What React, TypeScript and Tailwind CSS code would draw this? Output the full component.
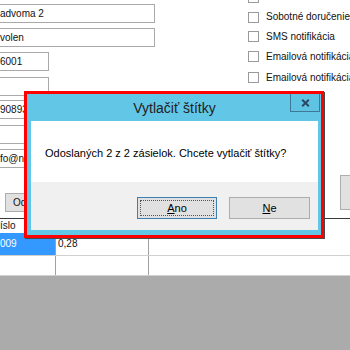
import React from "react";

function Field({ cls, text }: { cls: string; text?: string }) {
  return (
    <div className={`h-[19px] border border-[#a9a9a9] bg-white ml-[-8px] pl-[7px] flex items-center whitespace-nowrap overflow-hidden ${cls}`}>
      {text}
    </div>
  );
}

function Check({ cls, label }: { cls: string; label: string }) {
  return (
    <div className={`flex items-center gap-[7px] whitespace-nowrap ${cls}`}>
      <div className="w-[11px] h-[11px] border border-[#9a9a9a] bg-white shrink-0" />
      <span>{label}</span>
    </div>
  );
}

export default function App() {
  return (
    <div className="relative w-[350px] h-[350px] overflow-hidden bg-white text-[10px] leading-[12px] text-[#111] font-['Liberation_Sans',Arial,sans-serif]">
      <div className="flex flex-col h-full">
        {/* top form area */}
        <div className="flex h-[175px]">
          <div className="w-[248px] shrink-0 flex flex-col">
            <Field cls="mt-[4px] w-[163px]" text="advoma 2" />
            <Field cls="mt-[5px] w-[163px]" text="volen" />
            <Field cls="mt-[5px] w-[57px]" text="6001" />
            <Field cls="mt-[6px] w-[57px]" text="" />
            <Field cls="mt-[4px] w-[163px]" text="90893" />
            <Field cls="mt-[6px] w-[163px]" text="" />
            <Field cls="mt-[5px] w-[163px]" text="fo@ne" />
          </div>
          <div className="flex flex-col mt-[-13px] min-w-0">
            <Check cls="h-[20px]" label="" />
            <Check cls="h-[20px]" label="Sobotné doručenie" />
            <Check cls="h-[19px]" label="SMS notifikácia" />
            <Check cls="h-[21px]" label="Emailová notifikácia" />
            <Check cls="h-[21px]" label="Emailová notifikácia" />
          </div>
        </div>

        {/* button row */}
        <div className="flex justify-between h-[43px]">
          <div className="ml-[5px] mt-[18px] h-[19px] w-[90px] border border-[#adadad] bg-[#e1e1e1] pl-[7px] flex items-center">
            Odoslať
          </div>
          <div className="w-[20px] h-[35px] mr-[-10px] border border-[#adadad] bg-[#e1e1e1]" />
        </div>

        {/* table */}
        <div className="border-t border-[#3a3a3a] grid grid-cols-[56px_93px_1fr]">
          <div className="h-[14px] border-r border-[#a0a0a0] flex items-center whitespace-nowrap">íslo</div>
          <div className="h-[14px] border-r border-[#a0a0a0]" />
          <div className="h-[14px]" />

          <div className="h-[22px] border-r border-[#a0a0a0] bg-[#3399ff] text-white flex items-center pl-0">009</div>
          <div className="h-[22px] border-r border-[#a0a0a0] flex items-center pl-[2px]">0,28</div>
          <div className="h-[22px]" />

          <div className="h-[21px] border-t border-b border-[#d0d0d0]">
            <div className="h-full border-r border-[#a0a0a0]" />
          </div>
          <div className="h-[21px] border-t border-b border-[#d0d0d0]">
            <div className="h-full border-r border-[#a0a0a0]" />
          </div>
          <div className="h-[21px] border-t border-b border-[#d0d0d0]" />
        </div>

        <div className="flex-1 bg-[#ababab]" />
      </div>

      {/* dialog */}
      <div className="absolute left-[24px] top-[91px] w-[300px] border-[3px] border-[#ff0000] shadow-[1px_1px_0_#4a4a4a]">
        <div className="bg-[#62c6e7] pl-[4px] pr-[3px] pb-[5px] flex flex-col">
          <div className="relative h-[27px] flex items-center justify-center">
            <span className="text-[14px] leading-[16px] text-[#222]">Vytlačiť štítky</span>
            <div className="absolute right-[-2px] top-0 w-[30px] h-[18px] border border-t-0 border-[#3f7796] bg-[#5fc3e3] flex items-center justify-center">
              <svg width="9" height="8" viewBox="0 0 9 8">
                <path d="M1.2 0.8 L7.8 7.2 M7.8 0.8 L1.2 7.2" stroke="#2a4a63" strokeWidth="2" fill="none" />
              </svg>
            </div>
          </div>
          <div className="bg-white h-[61px] pl-[14px] pt-[26px] text-[11px] leading-[13px] text-black whitespace-nowrap">
            Odoslaných 2 z 2 zásielok. Chcete vytlačiť štítky?
          </div>
          <div className="bg-[#f0f0f0] h-[48px] flex justify-end items-start pt-[15px] pr-[8px] gap-[12px] text-[11px] text-black">
            <div className="relative w-[80px] h-[22px] border border-[#3c7fb1] bg-[#e1e1e1] flex items-center justify-center">
              <div className="absolute inset-[2px] border border-dotted border-[#555]" />
              <span><span className="underline">A</span>no</span>
            </div>
            <div className="w-[81px] h-[22px] border border-[#adadad] bg-[#e1e1e1] flex items-center justify-center">
              <span><span className="underline">N</span>e</span>
            </div>
          </div>
        </div>
      </div>
    </div>
  );
}
